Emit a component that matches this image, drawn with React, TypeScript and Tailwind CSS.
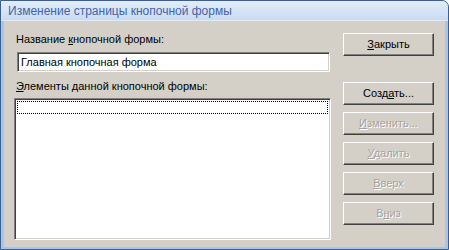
import React from "react";

const font = { fontFamily: '"Liberation Sans", Arial, sans-serif' };

function Btn({ children, disabled, className = "" }: { children: React.ReactNode; disabled?: boolean; className?: string }) {
  return (
    <div
      className={
        "h-[23px] w-[91px] flex items-center justify-center border border-t-white border-l-white border-r-[#404040] border-b-[#404040] shadow-[inset_-1px_-1px_0_#808080] text-[11px] " +
        (disabled ? "text-[#a3a3a3] [text-shadow:1px_1px_0_#ffffff] " : "text-black ") +
        className
      }
    >
      {children}
    </div>
  );
}

export default function App() {
  return (
    <div className="w-[449px] h-[250px] bg-white" style={font}>
      <div className="w-[449px] h-[250px] flex flex-col border border-[#3d5f90] rounded-tr-[7px] overflow-hidden bg-[#a8c4ea]">
        <div className="h-[20px] flex items-center pl-[7px] bg-gradient-to-b from-[#e2ecf9] to-[#c9dbf2] border-b border-[#dfe9f8]">
          <span className="text-[12px] text-[#4464a6] leading-none">Изменение страницы кнопочной формы</span>
        </div>
        <div className="flex-1 mx-[3px] mb-[2px] bg-[#d4d0c8] flex text-[11px] text-black">
          <div className="w-[331px] flex flex-col pl-[10px]">
            <div className="mt-[12px] pl-[2px] leading-[13px]">
              Название <span className="underline">к</span>нопочной формы:
            </div>
            <div className="mt-[6px] ml-[3px] w-[313px] h-[20px] bg-white border border-t-[#808080] border-l-[#808080] border-b-white border-r-white shadow-[inset_1px_1px_0_#404040,inset_-1px_-1px_0_#d4d0c8] flex items-center pl-[3px] leading-none">
              Главная кнопочная форма
            </div>
            <div className="mt-[8px] pl-[2px] leading-[13px]">
              <span className="underline">Э</span>лементы данной кнопочной формы:
            </div>
            <div className="mt-[5px] w-[317px] h-[142px] bg-white border border-t-[#808080] border-l-[#808080] border-b-white border-r-white shadow-[inset_1px_1px_0_#404040,inset_-1px_-1px_0_#d4d0c8] p-[2px]">
              <div className="h-[13px] border border-dotted border-black" />
            </div>
          </div>
          <div className="flex flex-col pl-[8px] pt-[12px] gap-[7px]">
            <Btn>
              <span><span className="underline">З</span>акрыть</span>
            </Btn>
            <Btn className="mt-[19px]">
              <span>Созд<span className="underline">а</span>ть...</span>
            </Btn>
            <Btn disabled>
              <span><span className="underline">И</span>зменить...</span>
            </Btn>
            <Btn disabled>
              <span><span className="underline">У</span>далить</span>
            </Btn>
            <Btn disabled>
              <span><span className="underline">В</span>верх</span>
            </Btn>
            <Btn disabled>
              <span>В<span className="underline">н</span>из</span>
            </Btn>
          </div>
        </div>
      </div>
    </div>
  );
}
